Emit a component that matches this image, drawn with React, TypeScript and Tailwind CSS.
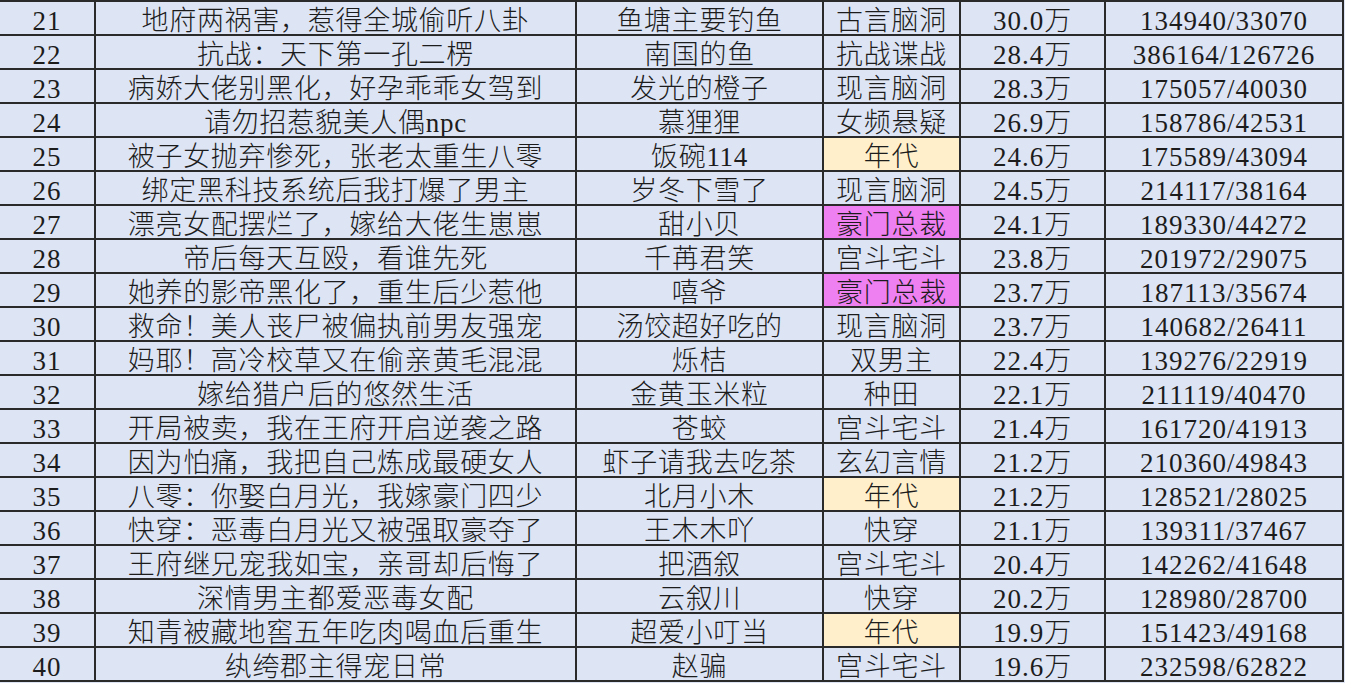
import React from "react";

type Row = [string, string, string, string, string, string, string?];

const rows: Row[] = [
  ["21", "地府两祸害，惹得全城偷听八卦", "鱼塘主要钓鱼", "古言脑洞", "30.0万", "134940/33070"],
  ["22", "抗战：天下第一孔二楞", "南国的鱼", "抗战谍战", "28.4万", "386164/126726"],
  ["23", "病娇大佬别黑化，好孕乖乖女驾到", "发光的橙子", "现言脑洞", "28.3万", "175057/40030"],
  ["24", "请勿招惹貌美人偶npc", "慕狸狸", "女频悬疑", "26.9万", "158786/42531"],
  ["25", "被子女抛弃惨死，张老太重生八零", "饭碗114", "年代", "24.6万", "175589/43094", "y"],
  ["26", "绑定黑科技系统后我打爆了男主", "岁冬下雪了", "现言脑洞", "24.5万", "214117/38164"],
  ["27", "漂亮女配摆烂了，嫁给大佬生崽崽", "甜小贝", "豪门总裁", "24.1万", "189330/44272", "m"],
  ["28", "帝后每天互殴，看谁先死", "千苒君笑", "宫斗宅斗", "23.8万", "201972/29075"],
  ["29", "她养的影帝黑化了，重生后少惹他", "嘻爷", "豪门总裁", "23.7万", "187113/35674", "m"],
  ["30", "救命！美人丧尸被偏执前男友强宠", "汤饺超好吃的", "现言脑洞", "23.7万", "140682/26411"],
  ["31", "妈耶！高冷校草又在偷亲黄毛混混", "烁桔", "双男主", "22.4万", "139276/22919"],
  ["32", "嫁给猎户后的悠然生活", "金黄玉米粒", "种田", "22.1万", "211119/40470"],
  ["33", "开局被卖，我在王府开启逆袭之路", "苍蛟", "宫斗宅斗", "21.4万", "161720/41913"],
  ["34", "因为怕痛，我把自己炼成最硬女人", "虾子请我去吃茶", "玄幻言情", "21.2万", "210360/49843"],
  ["35", "八零：你娶白月光，我嫁豪门四少", "北月小木", "年代", "21.2万", "128521/28025", "y"],
  ["36", "快穿：恶毒白月光又被强取豪夺了", "王木木吖", "快穿", "21.1万", "139311/37467"],
  ["37", "王府继兄宠我如宝，亲哥却后悔了", "把酒叙", "宫斗宅斗", "20.4万", "142262/41648"],
  ["38", "深情男主都爱恶毒女配", "云叙川", "快穿", "20.2万", "128980/28700"],
  ["39", "知青被藏地窖五年吃肉喝血后重生", "超爱小叮当", "年代", "19.9万", "151423/49168", "y"],
  ["40", "纨绔郡主得宠日常", "赵骗", "宫斗宅斗", "19.6万", "232598/62822"],
];

const cell =
  "flex items-center justify-center h-[32px] pt-[6px] whitespace-nowrap overflow-hidden bg-[#dde4f4] tracking-[0.7px]";
const num = "tracking-[1px]";

export default function App() {
  return (
    <div className="w-[1345px] h-[683px] bg-[#dde4f4] overflow-hidden">
      <div
        className="grid grid-cols-[94px_479px_245px_135px_143px_236px] gap-[2px] pt-[2px] pr-[2px] pb-[2px] bg-[#2a2a2a] w-[1344px] text-[27px] leading-none text-[#1c1c1c] font-light"
        style={{ fontFamily: '"Liberation Serif", "Noto Sans CJK SC", serif' }}
      >
        {rows.map((r) => {
          const hl =
            r[6] === "y" ? "bg-[#fff0cb]" : r[6] === "m" ? "bg-[#ef80f2]" : "";
          return (
            <React.Fragment key={r[0]}>
              <div className={`${cell} ${num}`}>{r[0]}</div>
              <div className={cell}>{r[1]}</div>
              <div className={cell}>{r[2]}</div>
              <div className={`${cell} ${hl}`}>{r[3]}</div>
              <div className={`${cell} ${num}`}>{r[4]}</div>
              <div className={`${cell} ${num}`}>{r[5]}</div>
            </React.Fragment>
          );
        })}
      </div>
    </div>
  );
}
